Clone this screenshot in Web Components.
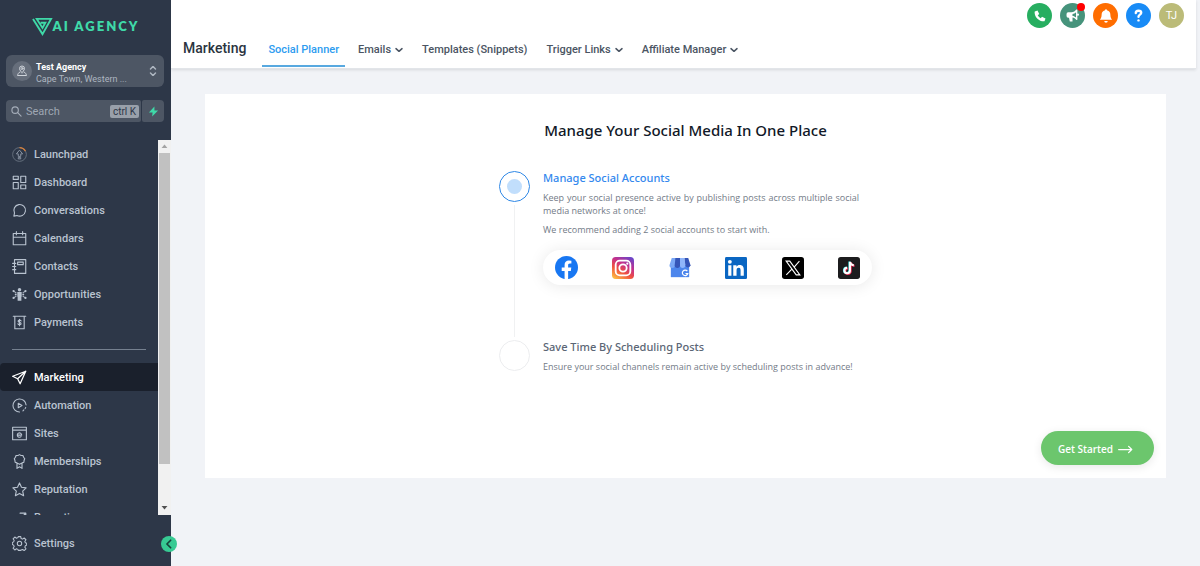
<!DOCTYPE html>
<html lang="en">
<head>
<meta charset="utf-8">
<meta name="viewport" content="width=device-width, initial-scale=1">
<title>Marketing - Social Planner</title>
<style>
  html, body { margin: 0; height: 100%; }
  body { font-family: Roboto, "Liberation Sans", sans-serif; font-size: 11px; background: #f1f3f7; color: #2d3748; }
</style>
</head>
<body>
<agency-app></agency-app>

<template id="t-app">
  <style>
    :host { display: flex; min-height: 100vh; }
    main { flex: 1; min-width: 0; display: flex; flex-direction: column; }
    .content { padding: 25px 34px; }
    app-sidebar { height: 100vh; }
  </style>
  <app-sidebar></app-sidebar>
  <main>
    <app-header></app-header>
    <div class="content"><planner-card></planner-card></div>
  </main>
</template>

<template id="t-sidebar">
  <style>
    :host { display: flex; flex-direction: column; width: 171px; flex: none; box-sizing: border-box; background: #2d3748; position: relative; color: #b9c3d0; font-weight: 500; }
    .logo { display: flex; align-items: center; justify-content: center; height: 52px; color: #3fd9a8; text-decoration: none; font: 800 13px Lato, sans-serif; letter-spacing: 2px; }
    .logo svg { width: 21px; height: 19px; }
    .top { padding: 3px 7px 18px 6px; display: grid; gap: 13px; }
    .location { display: flex; align-items: center; gap: 4px; height: 32px; padding: 0 6px; border: 0; border-radius: 6px; background: #4d5664; color: #aeb6c1; text-align: left; font: 400 9px/12px Roboto, sans-serif; }
    .avatar { display: grid; place-items: center; width: 20px; height: 20px; border-radius: 50%; background: #666e7b; color: #cfd4db; }
    .location b { display: block; color: #fff; font-weight: 700; }
    .location .txt { flex: 1; padding-top: 3px; }
    .row { display: flex; gap: 1px; }
    .search { flex: 1; min-width: 0; display: flex; align-items: center; gap: 4px; height: 22px; padding: 0 2px 0 5px; box-sizing: border-box; border-radius: 4px 2px 2px 4px; background: #4d5664; color: #a5adb9; }
    input { flex: 1; min-width: 0; width: 0; padding: 0; border: 0; outline: 0; background: none; color: #fff; font: 400 11px Roboto, sans-serif; }
    input::placeholder { color: #9fa7b3; opacity: 1; }
    kbd { padding: 0 3px; border-radius: 2px; background: #99a0aa; color: #2d3748; font: 400 10px/13px Roboto, sans-serif; }
    .bolt { display: grid; place-items: center; width: 22px; height: 22px; padding: 0; border: 0; border-radius: 2px 4px 4px 2px; background: #4d5664; color: #3fd9a8; }
    .scroll { flex: 1; min-height: 0; display: flex; overflow: hidden; }
    nav { flex: 1; min-width: 0; overflow: hidden; }
    hr { margin: 13px 12px; border: 0; height: 1px; background: #75808f; }
    .bar { display: flex; flex-direction: column; width: 13px; background: #f1f1f1; }
    .bar .up, .bar .down { display: grid; place-items: center; height: 13px; }
    .bar .up { color: #a3a3a3; } .bar .down { color: #505050; margin-top: auto; height: 15px; }
    .thumb { height: 83%; margin: 0 1px; background: #c1c1c1; }
    .foot { height: 51px; padding-top: 14px; box-sizing: border-box; }
    .collapse { position: absolute; right: -6px; bottom: 14px; width: 16px; height: 16px; padding: 0; border: 0; border-radius: 50%; background: #37ca93; color: #17433a; display: grid; place-items: center; }
  </style>
  <a class="logo" href="#" aria-label="AI Agency">
    <svg viewBox="0 0 22 20" fill="none" stroke="currentColor" stroke-width="2"><path d="M1 2l10 16L20 2H5l6 9.500L14 6H9"/></svg><span>AI AGENCY</span>
  </a>
  <div class="top">
    <button class="location"><span class="avatar"><ui-icon name="pin" size="12"></ui-icon></span><span class="txt"><b>Test Agency</b>Cape Town, Western ...</span><ui-icon name="updown" size="10"></ui-icon></button>
    <div class="row">
      <label class="search"><ui-icon name="search" size="11"></ui-icon><input type="search" placeholder="Search" aria-label="Search"><kbd>ctrl K</kbd></label>
      <button class="bolt" aria-label="Quick actions"><ui-icon name="bolt" size="11"></ui-icon></button>
    </div>
  </div>
  <div class="scroll">
    <nav>
      <nav-item icon="launch">Launchpad</nav-item>
      <nav-item icon="dashboard">Dashboard</nav-item>
      <nav-item icon="chat">Conversations</nav-item>
      <nav-item icon="calendar">Calendars</nav-item>
      <nav-item icon="contacts">Contacts</nav-item>
      <nav-item icon="opps">Opportunities</nav-item>
      <nav-item icon="pay">Payments</nav-item>
      <hr>
      <nav-item icon="send" active>Marketing</nav-item>
      <nav-item icon="auto">Automation</nav-item>
      <nav-item icon="sites">Sites</nav-item>
      <nav-item icon="badge">Memberships</nav-item>
      <nav-item icon="star">Reputation</nav-item>
      <nav-item icon="trend">Reporting</nav-item>
    </nav>
    <div class="bar" aria-hidden="true"><span class="up"><ui-icon name="triup" size="7"></ui-icon></span><span class="thumb"></span><span class="down"><ui-icon name="tridown" size="7"></ui-icon></span></div>
  </div>
  <div class="foot"><nav-item icon="gear">Settings</nav-item></div>
  <button class="collapse" aria-label="Collapse sidebar"><ui-icon name="left" size="10"></ui-icon></button>
</template>

<template id="t-nav-item">
  <style>
    :host { display: block; }
    a { display: flex; align-items: center; gap: 7px; height: 28px; padding: 0 12px; color: inherit; text-decoration: none; font-size: 11px; }
    :host([active]) a { background: #1a202c; color: #fff; border-radius: 4px 0 0 4px; }
  </style>
  <a href="#"><ui-icon size="15"></ui-icon><slot></slot></a>
</template>

<template id="t-header">
  <style>
    :host { display: flex; flex-direction: column; justify-content: space-between; height: 69px; box-sizing: border-box; margin-right: 4px; padding: 3px 12px 1px; background: #fff; border-bottom: 1px solid #e2e5e9; box-shadow: 0 1px 3px #0000001c; }
    .actions { display: flex; justify-content: flex-end; gap: 8px; }
    .bar { display: flex; align-items: center; gap: 16px; }
    h1 { margin: 0; font-size: 14px; line-height: 20px; font-weight: 500; color: #2b3440; }
    nav { display: flex; gap: 7px; }
    .bar h1 { padding-bottom: 4px; }
  </style>
  <div class="actions">
    <round-action label="Phone" style="--bg:#27ae60"><ui-icon name="phone" size="12"></ui-icon></round-action>
    <round-action label="Announcements" alert style="--bg:#46937b"><ui-icon name="horn" size="13"></ui-icon></round-action>
    <round-action label="Notifications" style="--bg:#ff6d00"><ui-icon name="bell" size="14"></ui-icon></round-action>
    <round-action label="Help" style="--bg:#188bf6"><ui-icon name="help" size="13"></ui-icon></round-action>
    <round-action label="Account" style="--bg:#bbbb78">TJ</round-action>
  </div>
  <div class="bar">
    <h1>Marketing</h1>
    <nav>
      <tab-link active>Social Planner</tab-link>
      <tab-link menu>Emails</tab-link>
      <tab-link>Templates (Snippets)</tab-link>
      <tab-link menu>Trigger Links</tab-link>
      <tab-link menu>Affiliate Manager</tab-link>
    </nav>
  </div>
</template>

<template id="t-round">
  <style>
    :host { display: block; position: relative; }
    button { display: grid; place-items: center; width: 25px; height: 25px; padding: 0; border: 0; border-radius: 50%; background: var(--bg); color: #fff; font: 400 11px Roboto, sans-serif; }
    i { display: none; position: absolute; right: 0; top: 0; width: 8px; height: 8px; border-radius: 50%; background: #f00; }
    :host([alert]) i { display: block; }
  </style>
  <button><slot></slot></button><i></i>
</template>

<template id="t-tab">
  <style>
    :host { display: block; }
    a { display: flex; align-items: center; gap: 4px; height: 34px; box-sizing: border-box; padding: 1px 6px 0; border-bottom: 2px solid transparent; color: #4b5563; text-decoration: none; font-weight: 500; font-size: 11px; }
    :host([active]) a { color: #2d9cf0; border-color: #58a9e0; }
    ui-icon { display: none; }
    :host([menu]) ui-icon { display: block; }
  </style>
  <a href="#"><slot></slot><ui-icon name="down" size="8"></ui-icon></a>
</template>

<template id="t-card">
  <style>
    :host { display: flex; flex-direction: column; align-items: center; box-sizing: border-box; min-height: 384px; padding: 24px 12px 13px; background: #fff; font-family: "Open Sans", "Noto Sans", sans-serif; }
    h2 { margin: 0 0 29px; font-family: "Noto Sans", sans-serif; font-size: 15px; line-height: 24px; font-weight: 500; color: #111827; }
    .steps { width: 373px; max-width: 100%; }
    .pill { display: flex; justify-content: space-between; align-items: center; height: 35px; margin-top: 14px; padding: 0 12px; box-sizing: border-box; border-radius: 18px; background: #fff; box-shadow: 0 1px 16px #00000018; }
    .go { align-self: flex-end; margin-top: auto; display: flex; align-items: center; gap: 5px; height: 34px; padding: 2px 21px 0 17px; border: 0; border-radius: 17px; background: #6cc66d; color: #fff; font: 600 10px "Open Sans", sans-serif; box-shadow: 0 2px 10px #00000018; }
  </style>
  <h2>Manage Your Social Media In One Place</h2>
  <div class="steps">
    <plan-step active>
      <span slot="title">Manage Social Accounts</span>
      <p>Keep your social presence active by publishing posts across multiple social media networks at once!</p>
      <p>We recommend adding 2 social accounts to start with.</p>
      <div class="pill" slot="extra">
        <ui-icon name="facebook" size="23"></ui-icon><ui-icon name="instagram" size="22"></ui-icon><ui-icon name="gbiz" size="22"></ui-icon><ui-icon name="linkedin" size="22"></ui-icon><ui-icon name="x" size="22"></ui-icon><ui-icon name="tiktok" size="22"></ui-icon>
      </div>
    </plan-step>
    <plan-step last>
      <span slot="title">Save Time By Scheduling Posts</span>
      <p>Ensure your social channels remain active by scheduling posts in advance!</p>
    </plan-step>
  </div>
  <button class="go">Get Started <ui-icon name="arrow" size="15"></ui-icon></button>
</template>

<template id="t-step">
  <style>
    :host { display: flex; gap: 13px; min-height: 169px; }
    :host([last]) { min-height: 0; }
    .mark { display: flex; flex-direction: column; align-items: center; width: 31px; flex: none; }
    .dot { display: grid; place-items: center; width: 31px; height: 31px; box-sizing: border-box; border: 1px solid #ecedef; border-radius: 50%; }
    .line { flex: 1; width: 1px; margin: 3px 0; background: #f0f1f2; }
    :host([last]) .line { display: none; }
    :host([active]) .dot { border-color: #2f88e6; }
    :host([active]) .dot::after { content: ""; width: 15px; height: 15px; border-radius: 50%; background: #c1defc; }
    .body { flex: 1; min-width: 0; }
    h3 { margin: 0 0 6px; font-family: "Noto Sans", sans-serif; font-size: 11px; line-height: 14px; font-weight: 500; color: #5b6675; }
    :host([active]) h3 { color: #3388ee; }
    ::slotted(p) { margin: 0 0 6px; padding-right: 13px; font-size: 9px; line-height: 13px; color: #737b87; text-align: justify; }
  </style>
  <div class="mark"><span class="dot"></span><span class="line"></span></div>
  <div class="body"><h3><slot name="title"></slot></h3><slot></slot><slot name="extra"></slot></div>
</template>

<script>
const line = (body, w = 1.5, box = 24) => `<svg viewBox="0 0 ${box} ${box}" fill="none" stroke="currentColor" stroke-width="${w}" stroke-linecap="round" stroke-linejoin="round">${body}</svg>`;
const solid = (body, box = 24) => `<svg viewBox="0 0 ${box} ${box}" fill="currentColor">${body}</svg>`;
const ICONS = {
  pin: line('<path d="M12 15s-5-4-5-8a5 5 0 0 1 10 0c0 4-5 8-5 8zM8 14c-3 0-5 6-5 7h18c0-1-2-7-5-7"/><circle cx="12" cy="7" r="2"/>', 2),
  updown: line('<path d="M6 7l6-6 6 6M6 17l6 6 6-6"/>', 3.5),
  search: line('<circle cx="9" cy="9" r="7"/><path d="M14 14l8 8"/>', 2.5),
  bolt: solid('<path d="M14 1L2 14h8l-1 9L22 10h-8z"/>'),
  launch: '<svg viewBox="0 0 24 24" fill="none" stroke="#66717f" stroke-width="1.500"><circle cx="12" cy="12" r="11"/><path d="M12 1a11 11 0 0 1 9.500 5.500" stroke="#d9813b" stroke-width="2"/><path stroke="#8d98a6" d="M12 5l5 6h-3v4h-4v-4H7zM10 17h4v2h-4z"/></svg>',
  dashboard: line('<path d="M2 2h8v5H2zM14 2h8v10h-8zM2 12h8v10H2zM14 16h8v6h-8z"/>', 1.8),
  chat: line('<path d="M3 21l1-5a9.300 9.300 0 1 1 4 4z"/>', 1.8),
  calendar: line('<path d="M2 4h20v18H2zM2 10h20M7 1v5M17 1v5"/>', 1.8),
  contacts: line('<path d="M4 1h18v22H4zM1 7h5M1 12h5M1 17h5M9 5h9v4H9z"/>', 1.8),
  opps: solid('<circle cx="12" cy="4.500" r="2.800"/><path d="M8.500 8h7v7.500H15V22H9v-6.500h-.5z"/><circle cx="2.500" cy="6.500" r="1.800"/><circle cx="21.500" cy="6.500" r="1.800"/><circle cx="2.500" cy="17.500" r="1.800"/><circle cx="21.500" cy="17.500" r="1.800"/><circle cx="6" cy="12" r="1.600"/><circle cx="18" cy="12" r="1.600"/><path d="M3 6.500l4 2v1.500L3 8zM21 6.500l-4 2v1.500l4-2zM3 17.500l4-2v-1.500L3 16zM21 17.500l-4-2v-1.500l4 2z"/>'),
  pay: line('<path d="M2 2h20M4.500 2v20h15V2M14.500 9.500C14 8 10 7.500 9.800 9.800c0 2.400 4.700 1.500 4.700 4 0 2.400-4.500 2.200-5 .2M12 7v10"/>', 1.8),
  send: line('<path d="M22 2L1 10l8 4 4 8zM22 2L9 14"/>', 2),
  auto: line('<path d="M12 22.500A10.500 10.500 0 1 1 22.500 11"/><path d="M10 8.500l6 3.500-6 3.500z"/><path d="M22 15l-1 2M19 19l-1.500 1.500"/>', 1.7),
  sites: line('<path d="M1 2h22v20H1zM1 6.500h22M8.500 14.500h7a3.500 3.500 0 1 0-1 2.500"/>', 1.8),
  badge: line('<path d="M12 1l2.500 1.300 3 .2 1 2.700 1.800 2.300-1 2.800-.3 3-2.800.9L12 16.500l-4.200-2.300-2.800-.9-.3-3-1-2.800 1.800-2.300 1-2.700 3-.2zM8 15v8l4-2.500 4 2.500v-8"/>', 1.8),
  star: line('<path d="M12 1.500l3.200 7 7.400.9-5.500 5.100 1.500 7.500L12 18.300 5.400 22l1.500-7.500L1.400 9.400l7.400-.9z"/>', 1.8),
  trend: line('<path d="M2 20l7-9 5 4 7-9M13 5h9v6"/>', 2),
  gear: line('<circle cx="12" cy="12" r="3.500"/><path d="M10 1h4l.6 3.100 2.200.9 2.700-1.800 2.800 2.800-1.800 2.700.9 2.200 2.100.6v3l-2.100 1.100-.9 2.200 1.800 2.700-2.800 2.800-2.700-1.800-2.200.9L14 23h-4l-.6-1.600-2.200-.9-2.700 1.800-2.800-2.800 1.800-2.700-.9-2.200L.500 13.500v-3l2.100-1.100.9-2.200L1.700 4.500l2.800-2.800 2.700 1.800 2.200-.9z"/>', 1.7),
  left: line('<path d="M16 3l-9 9 9 9"/>', 4),
  down: line('<path d="M3 8l9 8 9-8"/>', 4.500),
  triup: solid('<path d="M12 5l10 12H2z"/>'),
  tridown: solid('<path d="M12 19L2 7h20z"/>'),
  phone: solid('<path d="M1.500 3l5.500-2 3.500 7L7.500 10.500a13 13 0 0 0 6 6L16 13.500l7 3.500-2 5.500C11 24-.5 13 1.500 3z"/>'),
  horn: solid('<path d="M21 1v19l-2 .5c-2-3-4-4.500-7-4.800V23H7l-1.500-7H4a3 3 0 0 1-3-3V9a3 3 0 0 1 3-3h6c4 0 7-2 9-5zM18.500 6c-2 2-4 3-6.500 3v3.800c2.500 0 4.500 1 6.500 3z" fill-rule="evenodd"/><circle cx="22" cy="10.500" r="2"/>'),
  bell: solid('<path d="M10.300 2a1.700 1.700 0 0 1 3.400 0C18 3 19.500 6 19.500 10c0 4 1 6 3 8.500h-21c2-2.500 3-4.500 3-8.500 0-4 1.500-7 5.800-8zM9 20.500h6a3 3 0 0 1-6 0z"/>'),
  help: line('<path d="M7 7.500c0-6 10-5.500 10-.5 0 3.500-5 3.500-5 7.500"/><path d="M12 21v.1"/>', 4.400),
  arrow: line('<path d="M1 12h21M17 7l5 5-5 5"/>', 2),
  facebook: '<svg viewBox="0 0 24 24"><circle cx="12" cy="12" r="12" fill="#1877f2"/><path fill="#fff" d="M10 24v-8.400H7V12h3V9.400c0-3 1.800-4.700 4.500-4.700l2.600.2v3h-1.500c-1.500 0-1.900.9-1.900 1.800V12h3.300l-.5 3.600h-2.800V24z"/></svg>',
  instagram: '<svg viewBox="0 0 24 24"><defs><linearGradient id="g" x1=".2" y1="1" x2=".8" y2="0"><stop offset="0" stop-color="#fdb743"/><stop offset=".35" stop-color="#f0513e"/><stop offset=".65" stop-color="#c5308c"/><stop offset="1" stop-color="#6c45c8"/></linearGradient></defs><rect width="24" height="24" rx="4" fill="url(#g)"/><g fill="none" stroke="#fff" stroke-width="2"><rect x="4" y="4" width="16" height="16" rx="4.500"/><circle cx="12" cy="12" r="4"/></g><circle cx="16.700" cy="7.300" r="1.200" fill="#fff"/></svg>',
  gbiz: '<svg viewBox="0 0 24 24"><path fill="#4d86ec" d="M2 9h20v13H2z"/><path fill="#7aa7f5" d="M3 1h5L6.500 9a3 3 0 0 1-6 0z"/><path fill="#3555b8" d="M7 1h5v8a2.900 2.900 0 0 1-5.800 0z"/><path fill="#8fb5fa" d="M12 1h5l.8 8a2.900 2.900 0 0 1-5.800 0z"/><path fill="#3555b8" d="M17 1h4l2.500 8a2.900 2.900 0 0 1-5.700 0z"/><path d="M20 15.500a3 3 0 1 0 .5 2.500H18" fill="none" stroke="#fff" stroke-width="1.300"/></svg>',
  linkedin: '<svg viewBox="0 0 24 24"><rect width="24" height="24" rx="1.500" fill="#0a66c2"/><path fill="#fff" d="M3.500 9H7v11.500H3.500zM9 9h3.500v1.600C13.300 9.300 14.500 8.700 16 8.700c3.700 0 4.500 2.300 4.500 5.600v6.200H17V15c0-1.500 0-3.200-2-3.200s-2.400 1.500-2.400 3.100v5.600H9z"/><circle cx="5.300" cy="5.300" r="2.100" fill="#fff"/></svg>',
  x: '<svg viewBox="0 0 24 24"><rect width="24" height="24" rx="3" fill="#000"/><path d="M4.500 4.500h4l11 15h-4zM19 4.500l-6 6.700M11 13l-6.300 6.500" fill="none" stroke="#fff" stroke-width="1.200"/></svg>',
  tiktok: '<svg viewBox="0 0 24 24"><rect width="24" height="24" rx="3" fill="#1c1c1e"/><g fill="none" stroke-width="2.300"><path stroke="#2adbe0" d="M12.500 5v9.500a3 3 0 1 1-3-3"/><path stroke="#f4325a" d="M13.800 6v9.500a3 3 0 1 1-3-3M13.800 6c.5 2.500 2 3.500 4.200 3.700"/><path stroke="#fff" d="M13 5.300v9.500a3 3 0 1 1-3-3M13 5.300c.5 2.500 2 3.500 4.200 3.700"/></g></svg>'
};

class UiIcon extends HTMLElement {
  static observedAttributes = ['name', 'size'];
  constructor() { super(); this.attachShadow({ mode: 'open' }); }
  connectedCallback() { this.draw(); }
  attributeChangedCallback() { this.draw(); }
  draw() {
    const s = this.getAttribute('size') || 16;
    this.shadowRoot.innerHTML = `<style>:host{display:block;flex:none;width:${s}px;height:${s}px}svg{display:block;width:100%;height:100%}</style>${ICONS[this.getAttribute('name')] || ''}`;
  }
}
const define = (tag, id, setup) => customElements.define(tag, class extends HTMLElement {
  constructor() {
    super();
    this.attachShadow({ mode: 'open' }).append(document.getElementById(id).content.cloneNode(true));
  }
  connectedCallback() { if (setup) setup(this, this.shadowRoot); }
});
customElements.define('ui-icon', UiIcon);
define('nav-item', 't-nav-item', (el, root) => {
  root.querySelector('ui-icon').setAttribute('name', el.getAttribute('icon'));
});
define('round-action', 't-round', (el, root) => root.querySelector('button').setAttribute('aria-label', el.getAttribute('label')));
define('tab-link', 't-tab');
define('plan-step', 't-step');
define('planner-card', 't-card');
define('app-header', 't-header');
define('app-sidebar', 't-sidebar');
define('agency-app', 't-app');
</script>
</body>
</html>
